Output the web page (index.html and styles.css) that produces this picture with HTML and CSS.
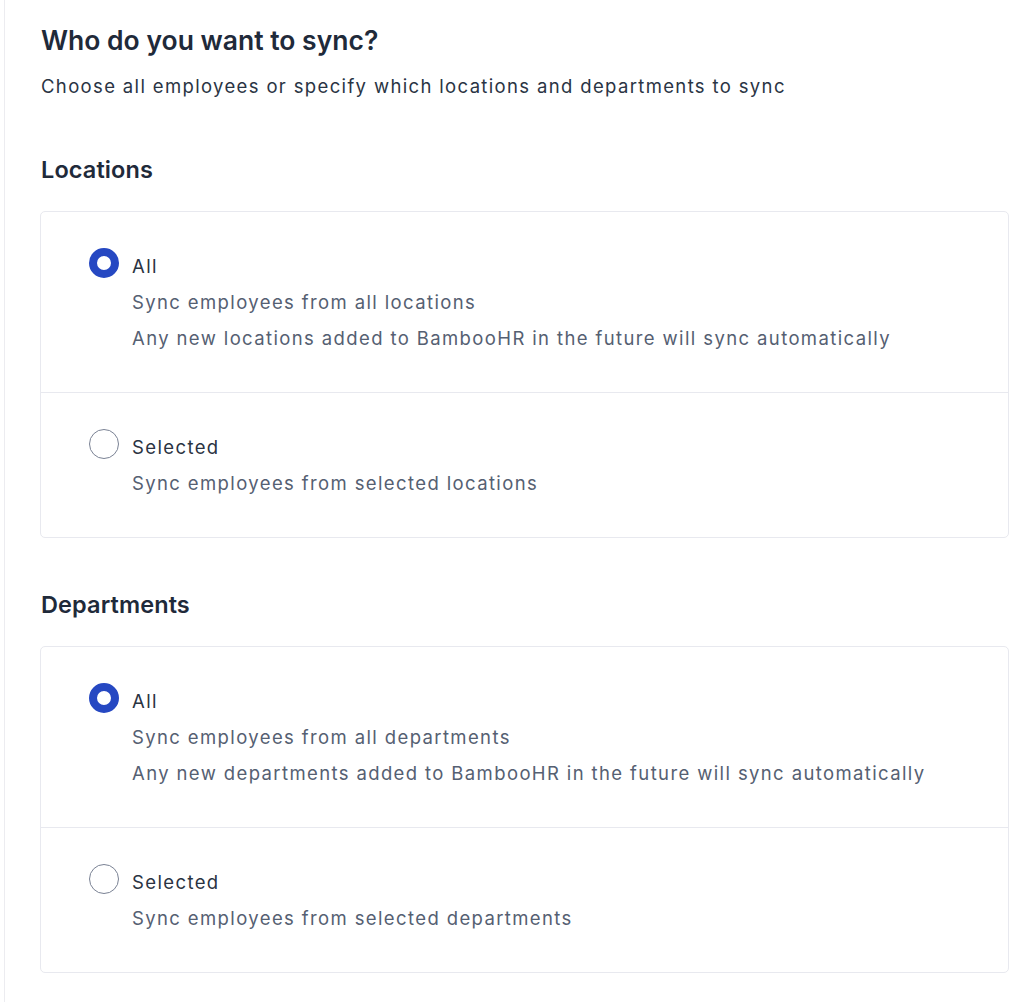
FILE: index.html
```html
<!DOCTYPE html>
<html>
<head>
<meta charset="utf-8">
<link rel="stylesheet" href="styles.css">
</head>
<body>
<div class="page">
  <h1 class="title">Who do you want to sync?</h1>
  <p class="subtitle">Choose all employees or specify which locations and departments to sync</p>

  <h2 class="section-title">Locations</h2>
  <div class="card">
    <div class="option">
      <span class="radio radio-on"></span>
      <div class="option-text">
        <div class="option-label">All</div>
        <div class="option-desc">Sync employees from all locations</div>
        <div class="option-desc">Any new locations added to BambooHR in the future will sync automatically</div>
      </div>
    </div>
    <div class="option">
      <span class="radio"></span>
      <div class="option-text">
        <div class="option-label">Selected</div>
        <div class="option-desc">Sync employees from selected locations</div>
      </div>
    </div>
  </div>

  <h2 class="section-title section-gap">Departments</h2>
  <div class="card">
    <div class="option">
      <span class="radio radio-on"></span>
      <div class="option-text">
        <div class="option-label">All</div>
        <div class="option-desc">Sync employees from all departments</div>
        <div class="option-desc">Any new departments added to BambooHR in the future will sync automatically</div>
      </div>
    </div>
    <div class="option">
      <span class="radio"></span>
      <div class="option-text">
        <div class="option-label">Selected</div>
        <div class="option-desc">Sync employees from selected departments</div>
      </div>
    </div>
  </div>
</div>
</body>
</html>
```

FILE: styles.css
```css
html, body {
  margin: 0;
  padding: 0;
  background: #ffffff;
}
body {
  font-family: Inter, "Noto Sans", sans-serif;
  color: #485264;
}
.page {
  margin-left: 4px;
  border-left: 1px solid #ececf0;
  padding: 24px 21px 40px 35px;
  min-height: 1002px;
  box-sizing: border-box;
}
.title {
  margin: 0 0 0 1px;
  font-size: 26.5px;
  line-height: 32px;
  font-weight: 600;
  color: #1f2a3a;
}
.subtitle {
  margin: 16px 0 0 1px;
  font-size: 18.5px;
  line-height: 28px;
  letter-spacing: 1.35px;
  color: #2a3444;
}
.section-title {
  margin: 55px 0 26px 1px;
  font-size: 23.5px;
  line-height: 30px;
  font-weight: 600;
  letter-spacing: 0.1px;
  color: #1f2a3a;
}
.section-gap {
  margin-top: 52px;
}
.card {
  border: 1px solid #e8e9ef;
  border-radius: 5px;
}
.option {
  display: flex;
  align-items: flex-start;
  gap: 13px;
  padding: 36px 36px 36px 48px;
}
.option + .option {
  border-top: 1px solid #e8e9ef;
}
.radio {
  flex: none;
  width: 30px;
  height: 30px;
  box-sizing: border-box;
  border-radius: 50%;
  border: 1px solid #7a8294;
  background: #fff;
}
.radio-on {
  border: 8.5px solid #2648c2;
}
.option-text {
  font-size: 18.5px;
  line-height: 36px;
  letter-spacing: 1.38px;
}
.option-label {
  color: #2a3342;
}
.option-desc {
  color: #556072;
}
```
